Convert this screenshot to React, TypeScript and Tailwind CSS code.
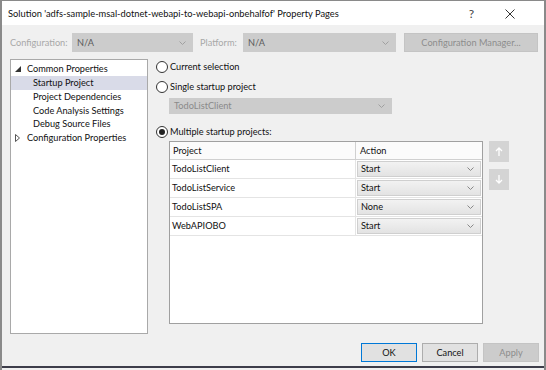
import React from "react";

const rows = [
  { name: "TodoListClient", action: "Start" },
  { name: "TodoListService", action: "Start" },
  { name: "TodoListSPA", action: "None" },
  { name: "WebAPIOBO", action: "Start" },
];

const tree = [
  { label: "Common Properties", level: 0, open: true },
  { label: "Startup Project", level: 1, selected: true },
  { label: "Project Dependencies", level: 1 },
  { label: "Code Analysis Settings", level: 1 },
  { label: "Debug Source Files", level: 1 },
  { label: "Configuration Properties", level: 0, open: false },
];

function Chevron({ color = "#7a7a7a" }: { color?: string }) {
  return (
    <svg width="7" height="4" viewBox="0 0 7 4" className="shrink-0">
      <polyline points="0.5,0.5 3.5,3.5 6.5,0.5" fill="none" stroke={color} strokeWidth="1" />
    </svg>
  );
}

function Radio({ checked }: { checked?: boolean }) {
  return (
    <span className="w-[12px] h-[12px] rounded-full border border-[#333] bg-white flex items-center justify-center shrink-0">
      {checked && <span className="w-[6px] h-[6px] rounded-full bg-[#222]" />}
    </span>
  );
}

function Select({ value, className, textColor }: { value: string; className: string; textColor: string }) {
  return (
    <div className={`flex items-center justify-between bg-[#cccccc] pl-[5px] pr-[7px] shrink-0 ${className}`}>
      <span className={textColor}>{value}</span>
      <Chevron color="#a0a0a0" />
    </div>
  );
}

export default function App() {
  return (
    <div className="w-[546px] h-[370px] bg-[#f0f0f0] flex flex-col border-x-2 border-t border-[#8a8a8a] text-[9.2px] text-[#111] font-['Lato','Liberation_Sans',sans-serif] leading-none whitespace-nowrap">
      {/* title bar */}
      <div className="h-[24px] bg-white flex items-center pl-[6px] pr-[29px] shrink-0">
        <span className="pt-[2px] text-[9.3px]">
          Solution 'adfs-sample-msal-dotnet-webapi-to-webapi-onbehalfof' Property Pages
        </span>
        <span className="ml-auto text-[12px] text-[#444] pt-[2px]">?</span>
        <svg width="10" height="10" viewBox="0 0 10 10" className="ml-[31px] mt-[2px]">
          <path d="M0.5 0.5 L9.5 9.5 M9.5 0.5 L0.5 9.5" stroke="#333" strokeWidth="1" />
        </svg>
      </div>

      {/* configuration row */}
      <div className="flex items-center mt-[8px] pl-[8px] h-[19px] shrink-0">
        <span className="w-[62px] text-[#a8a8a8]">Configuration:</span>
        <Select value="N/A" className="w-[121px] h-[19px]" textColor="text-[#5a5a5a]" />
        <span className="ml-[7px] w-[43px] text-[#a8a8a8]">Platform:</span>
        <Select value="N/A" className="w-[153px] h-[19px]" textColor="text-[#5a5a5a]" />
        <div className="ml-[8px] w-[134px] h-[19px] bg-[#cccccc] border border-[#c4c4c4] flex items-center justify-center text-[#8c8c8c]">
          Configuration Manager...
        </div>
      </div>

      {/* main */}
      <div className="flex mt-[7px] pl-[8px] h-[275px] shrink-0">
        <div className="w-[138px] h-full bg-white border border-[#a9a9a9] pt-[2px] shrink-0">
          {tree.map((t) => (
            <div
              key={t.label}
              className={`h-[13.8px] flex items-center ${t.selected ? "bg-[#d9dbe8]" : ""} ${t.level ? "pl-[22px]" : "pl-[4px]"}`}
            >
              {t.level === 0 && (
                <span className="w-[9px] flex items-center shrink-0 mr-[3px]">
                  {t.open ? (
                    <svg width="6" height="6" viewBox="0 0 6 6">
                      <polygon points="6,0 6,6 0,6" fill="#333" />
                    </svg>
                  ) : (
                    <svg width="5" height="8" viewBox="0 0 5 8">
                      <polygon points="0.5,0.5 4.5,4 0.5,7.5" fill="none" stroke="#555" strokeWidth="1" />
                    </svg>
                  )}
                </span>
              )}
              <span>{t.label}</span>
            </div>
          ))}
        </div>

        <div className="flex-1 pl-[8px] flex flex-col">
          <div className="flex items-center gap-[2px] h-[14px] mt-[1px]">
            <Radio />
            <span>Current selection</span>
          </div>
          <div className="flex items-center gap-[2px] h-[14px] mt-[6px]">
            <Radio />
            <span>Single startup project</span>
          </div>
          <Select value="TodoListClient" className="ml-[13px] mt-[4px] w-[223px] h-[16px]" textColor="text-[#8a8a8a]" />
          <div className="flex items-center gap-[2px] h-[14px] mt-[11px]">
            <Radio checked />
            <span>Multiple startup projects:</span>
          </div>

          <div className="flex mt-[2px]">
            <div className="ml-[13px] w-[314px] h-[183px] bg-white border border-[#a0a0a0] flex flex-col">
              <div className="flex h-[18px] border-b border-[#d0d0d0] bg-[#fbfbfb] shrink-0">
                <div className="w-[186px] border-r border-[#d0d0d0] flex items-center pl-[3px]">Project</div>
                <div className="flex-1 flex items-center pl-[4px]">Action</div>
              </div>
              {rows.map((r) => (
                <div key={r.name} className="flex h-[19px] border-b border-[#e4e4e4] shrink-0">
                  <div className="w-[186px] border-r border-[#e4e4e4] flex items-center pl-[2px]">{r.name}</div>
                  <div className="flex-1 flex items-center px-[1px]">
                    <div className="w-full h-[16px] bg-gradient-to-b from-[#f2f2f2] to-[#e3e3e3] border border-[#cfcfcf] flex items-center justify-between pl-[3px] pr-[6px]">
                      <span>{r.action}</span>
                      <Chevron color="#888" />
                    </div>
                  </div>
                </div>
              ))}
            </div>

            <div className="ml-[6px] flex flex-col gap-[7px]">
              <div className="w-[20px] h-[21px] bg-[#d4d4d4] flex items-center justify-center">
                <svg width="8" height="9" viewBox="0 0 8 9">
                  <path d="M4 9 V1 M1 4 L4 1 L7 4" fill="none" stroke="#fff" strokeWidth="1.3" />
                </svg>
              </div>
              <div className="w-[20px] h-[21px] bg-[#d4d4d4] flex items-center justify-center">
                <svg width="8" height="9" viewBox="0 0 8 9">
                  <path d="M4 0 V8 M1 5 L4 8 L7 5" fill="none" stroke="#fff" strokeWidth="1.3" />
                </svg>
              </div>
            </div>
          </div>
        </div>
      </div>

      {/* buttons */}
      <div className="flex justify-end gap-[5px] pr-[5px] mt-[9px] shrink-0">
        <div className="w-[56px] h-[19px] bg-[#e1e1e1] border border-[#0078d7] flex items-center justify-center">OK</div>
        <div className="w-[56px] h-[19px] bg-[#e1e1e1] border border-[#adadad] flex items-center justify-center">Cancel</div>
        <div className="w-[56px] h-[19px] bg-[#cccccc] border border-[#c4c4c4] flex items-center justify-center text-[#8c8c8c]">Apply</div>
      </div>

      <div className="mt-auto h-[2px] bg-[#3d3d4a] shrink-0" />
      <div className="h-[2px] bg-[#f0f0f0] shrink-0" />
    </div>
  );
}
